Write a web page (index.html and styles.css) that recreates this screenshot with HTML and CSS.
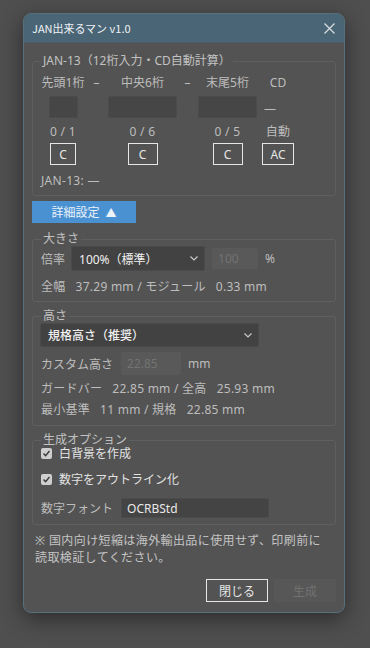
FILE: index.html
```html
<!DOCTYPE html>
<html lang="ja">
<head>
    <meta charset="UTF-8">
    <meta name="viewport" content="width=device-width, initial-scale=1.0">
    <title>JAN出来るマン v1.0</title>
    <link rel="stylesheet" href="styles.css">
</head>
<body>
    <!-- Dialog -->
    <div class="dialog">
        <div class="title-bar">
            <span class="title">JAN出来るマン v1.0</span>
            <svg class="close-icon" width="11" height="11" viewBox="0 0 11 11">
                <path d="M0.5 0.5 L10.5 10.5 M10.5 0.5 L0.5 10.5" stroke="#d6dbde" stroke-width="1.3" fill="none"/>
            </svg>
        </div>

        <div class="dialog-body">
            <!-- JAN input -->
            <fieldset class="group jan-group">
                <legend>JAN-13（12桁入力・CD自動計算）</legend>

                <div class="jan-row label-row">
                    <span>先頭1桁</span>
                    <span>–</span>
                    <span>中央6桁</span>
                    <span>–</span>
                    <span>末尾5桁</span>
                    <span>CD</span>
                </div>

                <div class="jan-row input-row">
                    <input type="text" class="field digit-1">
                    <span></span>
                    <input type="text" class="field digit-6">
                    <span></span>
                    <input type="text" class="field digit-5">
                    <span class="cd-value">—</span>
                </div>

                <div class="jan-row count-row">
                    <span>0 / 1</span>
                    <span></span>
                    <span>0 / 6</span>
                    <span></span>
                    <span>0 / 5</span>
                    <span>自動</span>
                </div>

                <div class="jan-row clear-row">
                    <button class="line-btn">C</button>
                    <span></span>
                    <button class="line-btn wide-c">C</button>
                    <span></span>
                    <button class="line-btn wide-c">C</button>
                    <button class="line-btn ac-btn">AC</button>
                </div>

                <div class="jan-result">JAN-13: —</div>
            </fieldset>

            <button class="toggle-btn">詳細設定<span class="arrow">▲</span></button>

            <!-- Size -->
            <fieldset class="group size-group">
                <legend>大きさ</legend>
                <div class="row scale-row">
                    <span class="label">倍率</span>
                    <div class="select scale-select">
                        <span>100%（標準）</span>
                        <svg width="8" height="5" viewBox="0 0 8 5"><polyline points="0.5,0.5 4,4 7.5,0.5" stroke="#c8c8c8" stroke-width="1.2" fill="none"/></svg>
                    </div>
                    <input type="text" class="field disabled scale-input" value="100" disabled>
                    <span class="label">%</span>
                </div>
                <div class="info">全幅&nbsp;&nbsp; 37.29 mm / モジュール&nbsp;&nbsp; 0.33 mm</div>
            </fieldset>

            <!-- Height -->
            <fieldset class="group height-group">
                <legend>高さ</legend>
                <div class="select height-select">
                    <span>規格高さ（推奨）</span>
                    <svg width="8" height="5" viewBox="0 0 8 5"><polyline points="0.5,0.5 4,4 7.5,0.5" stroke="#c8c8c8" stroke-width="1.2" fill="none"/></svg>
                </div>
                <div class="row custom-row">
                    <span class="label">カスタム高さ</span>
                    <input type="text" class="field disabled custom-input" value="22.85" disabled>
                    <span class="label">mm</span>
                </div>
                <div class="info guard">ガードバー&nbsp;&nbsp; 22.85 mm / 全高&nbsp;&nbsp; 25.93 mm</div>
                <div class="info minimum">最小基準&nbsp;&nbsp; 11 mm / 規格&nbsp;&nbsp; 22.85 mm</div>
            </fieldset>

            <!-- Options -->
            <fieldset class="group option-group">
                <legend>生成オプション</legend>
                <label class="check-row first">
                    <span class="check-box">
                        <svg width="9" height="9" viewBox="0 0 9 9"><polyline points="1.5,4.5 3.6,6.6 7.5,2" stroke="#3a3a3a" stroke-width="1.4" fill="none"/></svg>
                    </span>
                    白背景を作成
                </label>
                <label class="check-row second">
                    <span class="check-box">
                        <svg width="9" height="9" viewBox="0 0 9 9"><polyline points="1.5,4.5 3.6,6.6 7.5,2" stroke="#3a3a3a" stroke-width="1.4" fill="none"/></svg>
                    </span>
                    数字をアウトライン化
                </label>
                <div class="row font-row">
                    <span class="label">数字フォント</span>
                    <input type="text" class="field font-input" value="OCRBStd">
                </div>
            </fieldset>

            <p class="note">※ 国内向け短縮は海外輸出品に使用せず、印刷前に<br>読取検証してください。</p>

            <div class="footer">
                <button class="line-btn footer-btn">閉じる</button>
                <button class="footer-btn generate-btn" disabled>生成</button>
            </div>
        </div>
    </div>
</body>
</html>
```

FILE: styles.css
```css
* {
    margin: 0;
    padding: 0;
    box-sizing: border-box;
    font-family: "Noto Sans", "Noto Sans CJK JP", sans-serif;
}

body {
    background-color: #4e4f4e;
    color: #bdbdbd;
    font-size: 12px;
    min-height: 100vh;
}

.dialog {
    width: 322px;
    margin: 13px 0 0 23px;
    background-color: #535353;
    border: 1px solid #56707e;
    border-radius: 8px;
    box-shadow: 0 6px 22px rgba(0, 0, 0, 0.45);
    overflow: hidden;
}

.title-bar {
    height: 29px;
    background-color: #4a6576;
    display: flex;
    justify-content: space-between;
    align-items: center;
    padding: 0 9px 0 8px;
    border-bottom: 1px solid #4d5a62;
}

.title {
    color: #eef2f4;
    font-size: 11px;
    font-family: "Noto Sans CJK JP", sans-serif;
}

.dialog-body {
    padding: 12px 8px 10px 8px;
}

/* fieldsets */
.group {
    border: 1px solid #5f5f5f;
    border-radius: 3px;
    padding: 0 8px;
}

.group legend {
    padding: 0 2px;
    line-height: 12px;
    font-size: 12px;
    color: #c2c2c2;
}

/* jan grid */
.jan-row {
    display: grid;
    grid-template-columns: 44px 23px 69px 21px 59px 42px;
    justify-items: center;
    align-items: center;
}

.label-row {
    margin-top: 7px;
    line-height: 17px;
}

.input-row {
    margin-top: 5px;
    height: 22px;
}

.field {
    height: 22px;
    background-color: #464646;
    border: 1px solid #4b4b4b;
    border-radius: 2px;
    color: #e8e8e8;
    font-size: 12px;
    padding: 0 5px;
    outline: none;
}

.digit-1 {
    width: 29px;
}

.digit-6 {
    width: 69px;
}

.digit-5 {
    width: 59px;
}

.cd-value {
    justify-self: start;
    margin: 3px 0 0 7px;
}

.count-row {
    margin-top: 5px;
    line-height: 17px;
    letter-spacing: 0.3px;
}

.clear-row {
    margin-top: 3px;
}

.line-btn {
    height: 22px;
    width: 26px;
    background: transparent;
    border: 1px solid #e6e6e6;
    color: #e6e6e6;
    font-size: 12px;
    cursor: pointer;
}

.wide-c {
    width: 30px;
}

.ac-btn {
    width: 32px;
}

.jan-result {
    margin-top: 7px;
    line-height: 17px;
    padding-bottom: 6px;
    letter-spacing: 0.3px;
}

.toggle-btn {
    display: block;
    margin-top: 5px;
    width: 104px;
    height: 22px;
    background-color: #4a91d2;
    border: none;
    color: #eaf2fa;
    font-size: 12px;
    cursor: pointer;
}

.arrow {
    margin-left: 6px;
    font-size: 11px;
}

/* rows */
.size-group {
    margin-top: 10px;
}

.row {
    display: flex;
    align-items: center;
}

.scale-row {
    margin-top: 1px;
    height: 25px;
    gap: 6px;
}

.select {
    display: flex;
    justify-content: space-between;
    align-items: center;
    background-color: #424242;
    border: 1px solid #4a4a4a;
    border-radius: 2px;
    color: #f0f0f0;
    padding: 0 6px 0 7px;
}

.scale-select {
    width: 134px;
    height: 25px;
}

.scale-input {
    width: 46px;
    height: 21px;
    margin-left: 1px;
    margin-right: 1px;
}

.field.disabled {
    background-color: #585958;
    border-color: #585958;
    color: #737373;
}

.info {
    line-height: 17px;
    letter-spacing: 0.25px;
}

.size-group .info {
    margin-top: 7px;
    padding-bottom: 6px;
}

.height-group {
    margin-top: 8px;
}

.height-select {
    width: 219px;
    height: 24px;
    margin-top: 1px;
    margin-left: -1px;
    font-weight: 500;
}

.custom-row {
    margin-top: 5px;
    gap: 8px;
}

.custom-input {
    width: 60px;
    height: 23px;
    margin-right: -1px;
}

.guard {
    margin-top: 5px;
}

.minimum {
    margin-top: 4px;
    padding-bottom: 7px;
}

.option-group {
    margin-top: 8px;
}

.check-row {
    display: flex;
    align-items: center;
    gap: 7px;
    height: 14px;
    color: #e2e2e2;
}

.first {
    margin-top: 0;
}

.second {
    margin-top: 12px;
}

.check-box {
    width: 11px;
    height: 11px;
    background-color: #cfcfcf;
    border-radius: 2px;
    display: flex;
    align-items: center;
    justify-content: center;
}

.font-row {
    margin-top: 12px;
    gap: 8px;
    padding-bottom: 6px;
}

.font-input {
    width: 148px;
    height: 20px;
    background-color: #444444;
}

.note {
    margin-top: 7px;
    padding-left: 3px;
    line-height: 17px;
    letter-spacing: 0.4px;
    color: #c4c4c4;
}

.footer {
    display: flex;
    justify-content: flex-end;
    gap: 6px;
    margin-top: 13px;
}

.footer-btn {
    width: 62px;
    height: 23px;
    font-size: 12px;
}

.generate-btn {
    background-color: #575757;
    border: none;
    color: #727272;
}
```
